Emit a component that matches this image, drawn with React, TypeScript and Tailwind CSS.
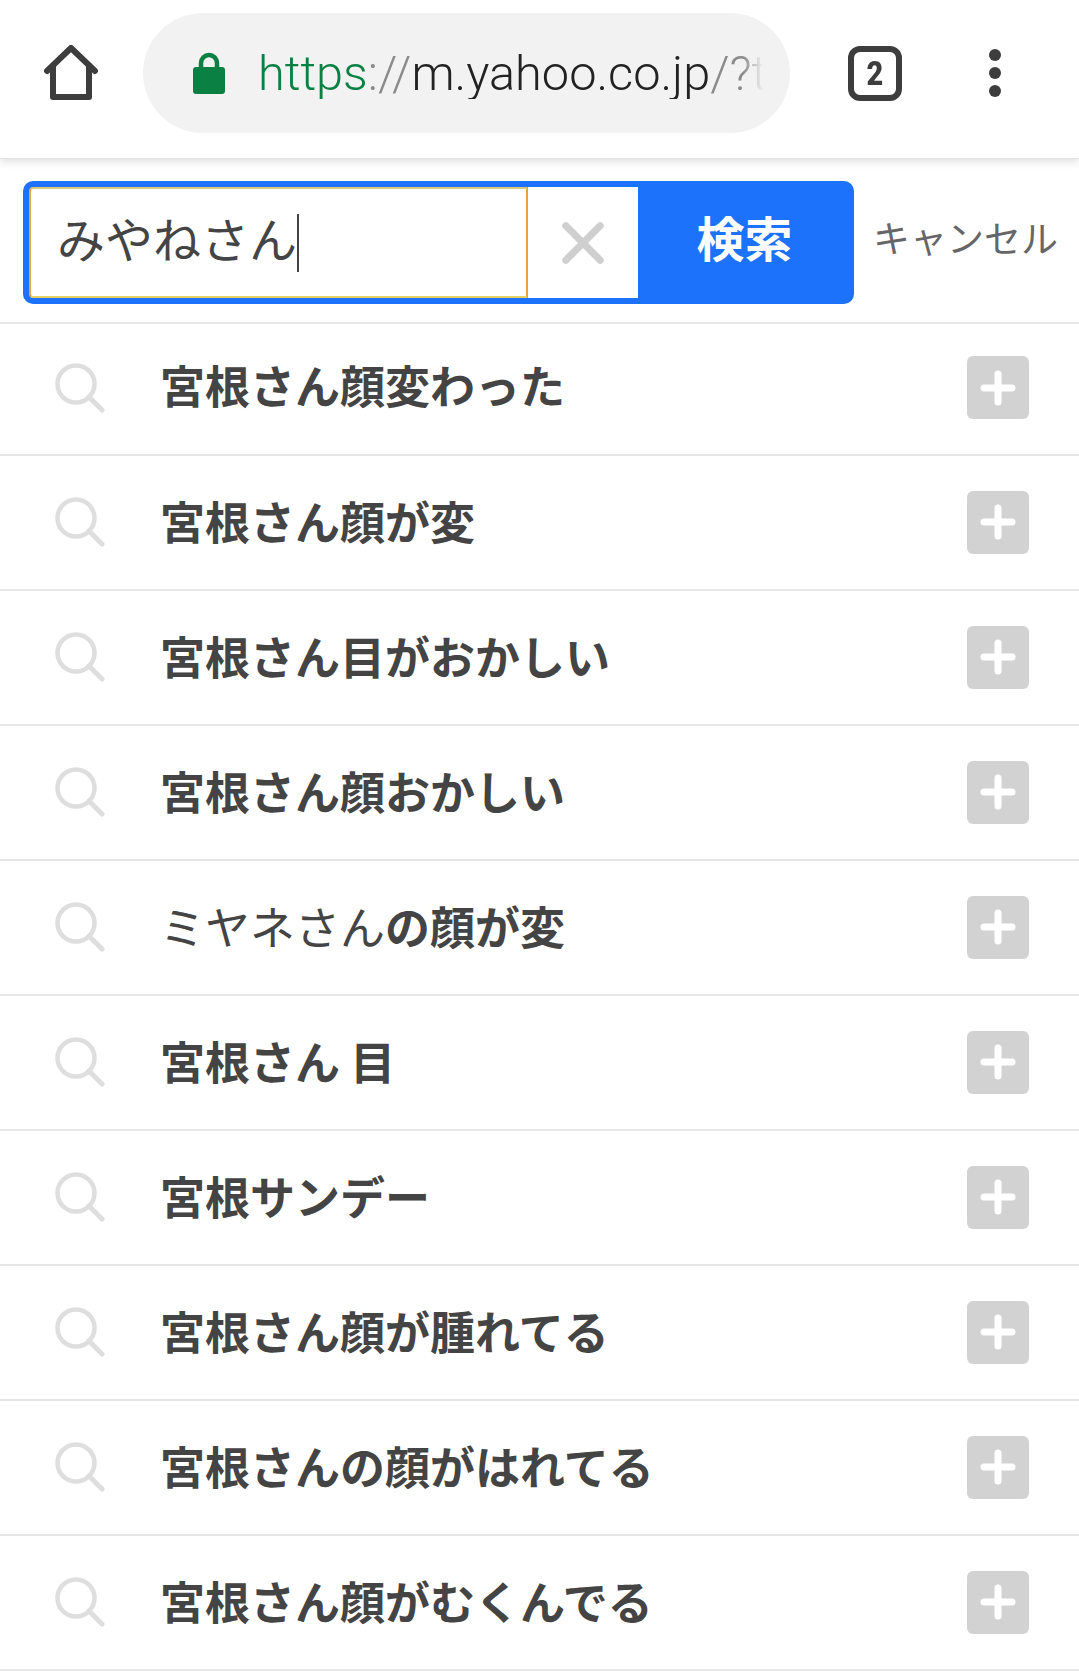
import React from "react";

const rows: React.ReactNode[] = [
  <b className="font-bold">宮根さん顔変わった</b>,
  <b className="font-bold">宮根さん顔が変</b>,
  <b className="font-bold">宮根さん目がおかしい</b>,
  <b className="font-bold">宮根さん顔おかしい</b>,
  <>ミヤネさん<b className="font-bold">の顔が変</b></>,
  <b className="font-bold">宮根さん 目</b>,
  <b className="font-bold">宮根サンデー</b>,
  <b className="font-bold">宮根さん顔が腫れてる</b>,
  <b className="font-bold">宮根さんの顔がはれてる</b>,
  <b className="font-bold">宮根さん顔がむくんでる</b>,
];

function Row({ first, children }: { first: boolean; children: React.ReactNode }) {
  return (
    <div className={first ? "flex h-[132px] items-center border-b-2 border-[#e6e6e6] pb-[3px]" : "flex h-[135px] items-center border-b-2 border-[#e6e6e6] pb-[1px]"}>
      <svg className="ml-[54px] h-[50px] w-[52px] shrink-0" viewBox="0 0 52 50" fill="none" stroke="#dedede">
        <circle cx="22" cy="21" r="18.5" strokeWidth="4.5" />
        <line x1="35" y1="34" x2="48" y2="47" strokeWidth="5" strokeLinecap="round" />
      </svg>
      <div className={first ? "mb-[6px] ml-[54px] flex-1 whitespace-nowrap text-[45px] leading-none text-[#444444]" : "mb-[4px] ml-[54px] flex-1 whitespace-nowrap text-[45px] leading-none text-[#444444]"}>{children}</div>
      <div className="mr-[50px] flex h-[63px] w-[62px] shrink-0 items-center justify-center rounded-[6px] bg-[#d2d2d2]">
        <svg className="h-[36px] w-[36px]" viewBox="0 0 36 36" stroke="#ffffff" strokeWidth="7" strokeLinecap="round">
          <line x1="18" y1="4" x2="18" y2="32" />
          <line x1="4" y1="18" x2="32" y2="18" />
        </svg>
      </div>
    </div>
  );
}

export default function App() {
  return (
    <div
      className="h-[1672px] w-[1079px] overflow-hidden bg-white"
      style={{ fontFamily: '"Noto Sans CJK JP", "Noto Sans", sans-serif' }}
    >
      <header className="flex h-[159px] items-center border-b border-[#e2e2e2] pb-[12px] shadow-[0_3px_8px_rgba(0,0,0,0.12)]">
        <svg className="ml-[44px] h-[56px] w-[54px] shrink-0" viewBox="0 0 54 56" fill="none" stroke="#3d3d3d" strokeWidth="6" strokeLinejoin="round" strokeLinecap="round">
          <path d="M3 26 L27 3 L51 26" />
          <path d="M9 21 V52 H45 V21" />
        </svg>
        <div className="ml-[45px] flex h-[120px] w-[647px] shrink-0 items-center rounded-full bg-[#f2f2f2] pl-[50px]">
          <svg className="h-[42px] w-[32px] shrink-0" viewBox="0 0 32 42">
            <path d="M8 18 V11 a8 8 0 0 1 16 0 V18" fill="none" stroke="#0b8043" strokeWidth="4.5" />
            <rect x="0" y="15" width="32" height="27" rx="3" fill="#0b8043" />
          </svg>
          <div
            className="ml-[33px] mt-[3px] w-[505px] overflow-hidden whitespace-nowrap text-[48.7px] font-light leading-none text-[#8a8a8a] [mask-image:linear-gradient(to_right,black_96%,transparent)]"
            style={{ fontFamily: "Roboto, sans-serif" }}
          >
            <span className="text-[#0b8043]">https</span>://<span className="text-[#222222]">m.yahoo.co.jp</span>/?t
          </div>
        </div>
        <div
          className="ml-[58px] flex h-[55px] w-[54px] shrink-0 items-center justify-center rounded-[12px] border-[6px] border-[#3d3d3d] text-[34px] font-black leading-none text-[#3d3d3d]"
          style={{ fontFamily: "Roboto, sans-serif" }}
        >
          <span className="inline-block scale-x-[0.85]">2</span>
        </div>
        <div className="ml-[87px] flex shrink-0 flex-col gap-[6px]">
          <span className="h-[12px] w-[12px] rounded-full bg-[#3d3d3d]" />
          <span className="h-[12px] w-[12px] rounded-full bg-[#3d3d3d]" />
          <span className="h-[12px] w-[12px] rounded-full bg-[#3d3d3d]" />
        </div>
      </header>
      <div className="flex h-[165px] items-start border-b-2 border-[#e6e6e6] pl-[23px] pt-[22px]">
        <div className="flex h-[123px] w-[831px] shrink-0 overflow-hidden rounded-[10px] bg-[#1c72fa]">
          <div className="my-[6px] ml-[6px] flex w-[499px] shrink-0 items-center rounded-l-[4px] border-[2px] border-[#e8a33a] border-t-[#d8c878] border-b-[#e8d060] bg-white pl-[26px] text-[48px] leading-none text-[#444444]">
            <span className="mb-[12px]">みやねさん</span>
            <span className="h-[58px] w-[2px] bg-[#444444]" />
          </div>
          <div className="my-[6px] flex w-[110px] shrink-0 items-center justify-center bg-white">
            <svg className="h-[42px] w-[42px]" viewBox="0 0 44 44" stroke="#cfcfcf" strokeWidth="7.5" strokeLinecap="round">
              <line x1="4" y1="4" x2="40" y2="40" />
              <line x1="40" y1="4" x2="4" y2="40" />
            </svg>
          </div>
          <div className="flex flex-1 items-center justify-center pb-[14px] pr-[3px] text-[48px] font-bold leading-none text-white">検索</div>
        </div>
        <div className="ml-[19px] flex h-[113px] items-center whitespace-nowrap text-[37px] leading-none text-[#666666]">キャンセル</div>
      </div>
      {rows.map((r, i) => (
        <Row key={i} first={i === 0}>{r}</Row>
      ))}
    </div>
  );
}
